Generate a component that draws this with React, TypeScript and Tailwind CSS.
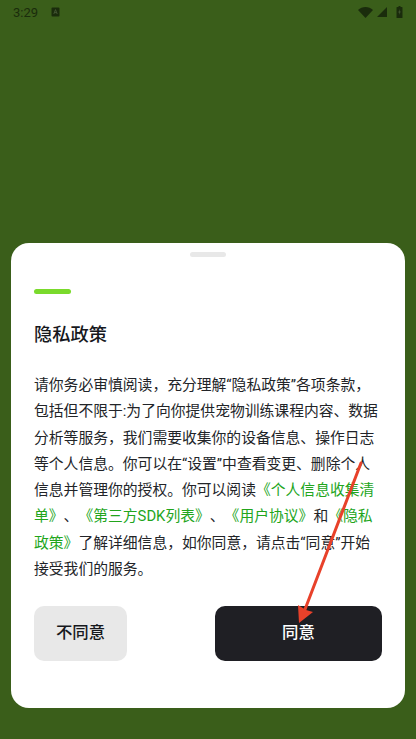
const cjk = "font-['Roboto','Noto_Sans_CJK_SC',sans-serif]"

function Link({ children }: { children: string }) {
  return <span className="text-[#22a51c]">{children}</span>
}

function StatusBar() {
  return (
    <div className="flex h-[24px] items-center pr-[13px] pl-[13px] text-[#1a2c0c]">
      <span className="text-[13px] leading-none">3:29</span>
      <svg className="ml-[13px]" width="9" height="10" viewBox="0 0 9 10">
        <rect width="8" height="9" x="0.5" y="0.5" rx="1" fill="#1a2c0c" />
        <path d="M2.8 7 4.5 2.6 6.2 7M3.4 5.6h2.2" fill="none" stroke="#4a5c3a" strokeWidth="0.8" />
      </svg>
      <div className="ml-auto flex items-center gap-[3px]">
        <svg width="15" height="11" viewBox="0 0 15 11">
          <path d="M0 3 C4 -1 11 -1 15 3 L7.5 11 Z" fill="#1a2c0c" />
        </svg>
        <svg className="ml-[1px]" width="10" height="10" viewBox="0 0 10 10">
          <path d="M10 0V10H0Z" fill="#1a2c0c" />
        </svg>
        <svg className="ml-[6px]" width="7" height="12" viewBox="0 0 6 12">
          <path d="M2 0h2v1h1.400a.6.6 0 0 1 .6.6v9.800a.6.6 0 0 1-.6.6H.6a.6.6 0 0 1-.6-.6V1.600a.6.6 0 0 1 .6-.6H2Z" fill="#1a2c0c" />
          <path d="M3.400 3 1.800 6.500H3L2.600 9 4.200 5.500H3Z" fill="#4a5c3a" />
        </svg>
      </div>
    </div>
  )
}

export default function App() {
  return (
    <div className={`${cjk} relative flex h-[739px] w-[416px] flex-col overflow-hidden bg-[#3a5e1a]`}>
      <StatusBar />
      <div className="mx-[11px] mt-[219px] flex h-[465px] flex-col rounded-[18px] bg-white px-[23px] pt-[9px]">
        <div className="mx-auto h-[5px] w-[36px] rounded-full bg-[#e8e8e8]" />
        <div className="mt-[32px] h-[5px] w-[37px] rounded-full bg-[#7ada2c]" />
        <h1 className="mt-[28px] text-[18.3px] leading-[26px] font-medium text-[#16181d]">隐私政策</h1>
        <p className="mt-[24px] h-[210px] w-[347px] text-[14.8px] leading-[26.3px] text-[#222428] [text-spacing-trim:space-all]">
          请你务必审慎阅读，充分理解“隐私政策”各项条款，包括但不限于:为了向你提供宠物训练课程内容、数据分析等服务，我们需要收集你的设备信息、操作日志等个人信息。你可以在“设置”中查看变更、删除个人信息并管理你的授权。你可以阅读
          <Link>《个人信息收集清单》</Link>、<Link>《第三方SDK列表》</Link>、<Link>《用户协议》</Link>和<Link>《隐私政策》</Link>
          了解详细信息，如你同意，请点击“同意”开始接受我们的服务。
        </p>
        <div className="mt-[24px] flex justify-between">
          <button className="h-[55px] w-[93px] rounded-[10px] bg-[#e8e8e8] text-[16.4px] font-medium text-[#16181d]">不同意</button>
          <button className="h-[55px] w-[167px] rounded-[10px] bg-[#1f1f24] text-[16.4px] font-medium text-white">同意</button>
        </div>
      </div>
      {/* red annotation arrow on top of the dialog */}
      <svg className="absolute top-0 left-0" width="416" height="739" viewBox="0 0 416 739">
        <path d="M361 463 304 612" stroke="#e8412a" strokeWidth="3" strokeLinecap="round" fill="none" />
        <path d="M299 623 298 605 306 610 313 612Z" fill="#e8412a" />
      </svg>
    </div>
  )
}
